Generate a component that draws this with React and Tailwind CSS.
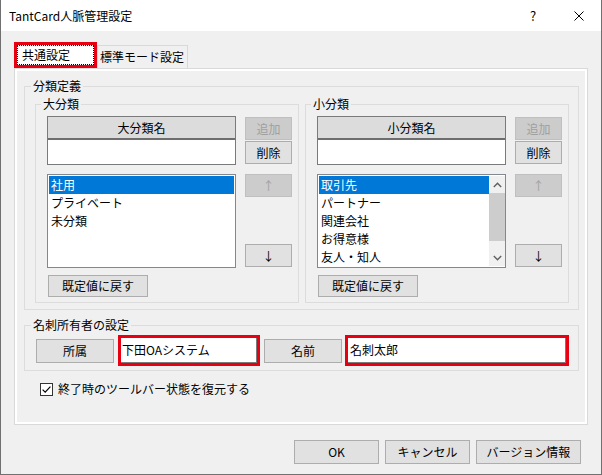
import React from 'react';

const font = "font-['Noto_Sans_CJK_JP','Noto_Sans_CJK_SC',sans-serif]";

function Btn({ children, className = '', disabled = false }) {
  return (
    <button
      type="button"
      className={`flex shrink-0 items-center justify-center border text-[12px] leading-none ${
        disabled ? 'border-[#bfbfbf] bg-[#cccccc] text-[#a0a0a0]' : 'border-[#adadad] bg-[#e1e1e1] text-black'
      } ${className}`}
    >
      {children}
    </button>
  );
}

function Chevron({ up }) {
  return (
    <svg width="9" height="6" viewBox="0 0 9 6">
      <path d={up ? 'M0.8 5 L4.5 1.3 L8.2 5' : 'M0.8 1 L4.5 4.7 L8.2 1'} fill="none" stroke="#606060" strokeWidth="1.4" />
    </svg>
  );
}

function Scrollbar() {
  return (
    <div className="flex w-[16px] flex-col bg-[#f0f0f0]">
      <div className="flex h-[17px] items-center justify-center">
        <Chevron up />
      </div>
      <div className="h-[48px] bg-[#cdcdcd]" />
      <div className="flex-1" />
      <div className="flex h-[17px] items-center justify-center">
        <Chevron />
      </div>
    </div>
  );
}

function CategoryGroup({ title, header, items, scroll }) {
  return (
    <fieldset className="w-[264px] border border-[#dcdcdc] pb-[5px]">
      <legend className="ml-[5px] px-[2px] text-[12px] leading-[16px]">{title}</legend>
      <div className="pl-[11px] pr-[6px] pt-[4px]">
        {/* name entry + add/delete */}
        <div className="flex gap-[9px]">
          <div className="w-[189px] border border-[#7a7a7a]">
            <div className="flex h-[23px] items-center justify-center border-b-2 border-[#6e6e6e] bg-[#dcdcdc] text-[12px] leading-none">
              {header}
            </div>
            <div className="h-[24px] bg-white" />
          </div>
          <div className="mt-px flex w-[47px] flex-col gap-px">
            <Btn disabled className="h-[23px]">追加</Btn>
            <Btn className="h-[23px]">削除</Btn>
          </div>
        </div>

        {/* list + move buttons */}
        <div className="mt-[9px] flex gap-[9px]">
          <div className={`flex h-[94px] w-[189px] border border-[#828790] bg-white ${scroll ? 'py-px pl-px' : 'p-px'}`}>
            <div className="min-w-0 flex-1 overflow-hidden">
              {items.map((it, i) => (
                <div
                  key={it}
                  className={`h-[18px] whitespace-nowrap pl-[2px] text-[12px] leading-[18px] ${
                    i === 0 ? 'bg-[#0078d7] text-white' : 'text-black'
                  }`}
                >
                  {it}
                </div>
              ))}
            </div>
            {scroll && <Scrollbar />}
          </div>
          <div className="flex h-[93px] w-[47px] flex-col justify-between">
            <Btn disabled className="h-[23px]">↑</Btn>
            <Btn className="h-[23px]">↓</Btn>
          </div>
        </div>

        <Btn className="ml-px mt-[7px] h-[22px] w-[100px]">既定値に戻す</Btn>
      </div>
    </fieldset>
  );
}

export default function App() {
  return (
    <div className={`flex h-[475px] w-[602px] flex-col border-x border-b border-[#707070] bg-[#f0f0f0] text-black ${font}`}>
      {/* title bar */}
      <div className="flex h-[31px] shrink-0 items-center bg-white pl-[8px] pr-[17px] text-[12px] leading-none">
        <span>TantCard人脈管理設定</span>
        <span className="ml-auto w-[12px] text-center text-[13px]">?</span>
        <svg className="ml-[35px]" width="10" height="10" viewBox="0 0 10 10">
          <path d="M0.5 0.5 L9.5 9.5 M9.5 0.5 L0.5 9.5" stroke="#000" strokeWidth="1" />
        </svg>
      </div>

      <div className="pl-[13px] pt-[11px]">
        {/* tabs */}
        <div className="flex h-[26px] items-end">
          <div className="h-[26px] w-[83px] border-[3px] border-[#e60012] bg-white">
            <div className="flex h-full items-center border border-dotted border-black pl-[4px] text-[12px] leading-none">
              共通設定
            </div>
          </div>
          <div className="flex h-[23px] w-[91px] items-center border-x border-t border-[#d9d9d9] pl-[2px] text-[12px] leading-none">
            標準モード設定
          </div>
        </div>

        {/* tab page */}
        <div className="h-[357px] w-[574px] border border-[#d9d9d9] pl-[9px] pt-[9px] shadow-[inset_0_0_0_2px_#ffffff]">
          <fieldset className="w-[555px] border border-[#dcdcdc] pb-[6px]">
            <legend className="ml-[6px] px-[2px] text-[12px] leading-[16px]">分類定義</legend>
            <div className="flex gap-[6px] pl-[10px] pt-[2px]">
              <CategoryGroup title="大分類" header="大分類名" items={['社用', 'プライベート', '未分類']} />
              <CategoryGroup
                title="小分類"
                header="小分類名"
                items={['取引先', 'パートナー', '関連会社', 'お得意様', '友人・知人']}
                scroll
              />
            </div>
          </fieldset>

          <fieldset className="mt-[7px] w-[555px] border border-[#dcdcdc] pb-[4px]">
            <legend className="ml-[6px] px-[2px] text-[12px] leading-[16px]">名刺所有者の設定</legend>
            <div className="flex items-center pl-[11px] pt-[2px]">
              <Btn className="h-[24px] w-[78px]">所属</Btn>
              <div className="ml-[4px] h-[31px] w-[142px] border-[3px] border-[#e60012]">
                <div className="flex h-full items-center border-b border-r border-[#7a7a7a] bg-white pl-px text-[12px] leading-none">
                  下田OAシステム
                </div>
              </div>
              <Btn className="ml-[4px] h-[24px] w-[78px]">名前</Btn>
              <div className="ml-[3px] h-[31px] w-[224px] border-[3px] border-[#e60012]">
                <div className="flex h-full items-center border-b border-r border-[#7a7a7a] bg-white pl-[2px] text-[12px] leading-none">
                  名刺太郎
                </div>
              </div>
            </div>
          </fieldset>

          <label className="ml-[16px] mt-[10px] flex h-[16px] items-center gap-[5px] text-[12px] leading-none">
            <svg width="13" height="13" viewBox="0 0 13 13">
              <rect x="0.5" y="0.5" width="12" height="12" fill="#fff" stroke="#333" />
              <path d="M2.6 6.6 L5.2 9.2 L10.4 3.6" fill="none" stroke="#000" strokeWidth="1.2" />
            </svg>
            終了時のツールバー状態を復元する
          </label>
        </div>

        {/* dialog buttons */}
        <div className="mt-[15px] flex justify-end gap-[6px] pr-[20px]">
          <Btn className="h-[24px] w-[85px]">OK</Btn>
          <Btn className="h-[24px] w-[85px]">キャンセル</Btn>
          <Btn className="h-[24px] w-[105px]">バージョン情報</Btn>
        </div>
      </div>
    </div>
  );
}
